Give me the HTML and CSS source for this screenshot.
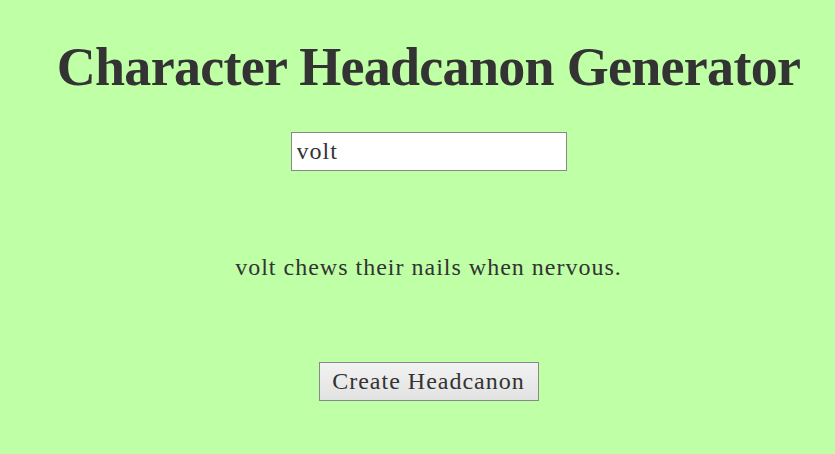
FILE: index.html
```html
<!DOCTYPE html>
<html>
<head>
<meta charset="utf-8">
<link rel="stylesheet" href="styles.css">
</head>
<body>
<div class="page">
  <h1 class="title">Character Headcanon Generator</h1>
  <input class="name" type="text" value="volt">
  <p class="result">volt chews their nails when nervous.</p>
  <button class="create">Create Headcanon</button>
</div>
</body>
</html>
```
FILE: styles.css
```css
html, body {
  margin: 0;
  padding: 0;
  background: #bfffa5;
}
body {
  font-family: "Liberation Serif", "Times New Roman", serif;
  color: #333;
  overflow: hidden;
}
.page {
  display: flex;
  flex-direction: column;
  align-items: center;
  padding-left: 22px;
  padding-top: 36px;
}
.title {
  font-size: 54px;
  letter-spacing: -0.7px;
  font-weight: bold;
  margin: 0;
  line-height: 62px;
  white-space: nowrap;
}
.name {
  margin-top: 34px;
  width: 276px;
  height: 39px;
  box-sizing: border-box;
  border: 1px solid #888;
  background: #fff;
  font-family: "Liberation Serif", serif;
  font-size: 24px;
  letter-spacing: 1px;
  color: #333;
  padding: 2px 5px;
  outline: none;
}
.result {
  margin: 82px 0 0;
  font-size: 24px;
  letter-spacing: 1px;
  line-height: 28px;
}
.create {
  margin-top: 81px;
  width: 220px;
  height: 39px;
  box-sizing: border-box;
  border: 1px solid #888;
  background: linear-gradient(#f2f2f2, #e2e2e2);
  font-family: "Liberation Serif", serif;
  font-size: 24px;
  letter-spacing: 1px;
  color: #333;
  padding: 0;
}
```
